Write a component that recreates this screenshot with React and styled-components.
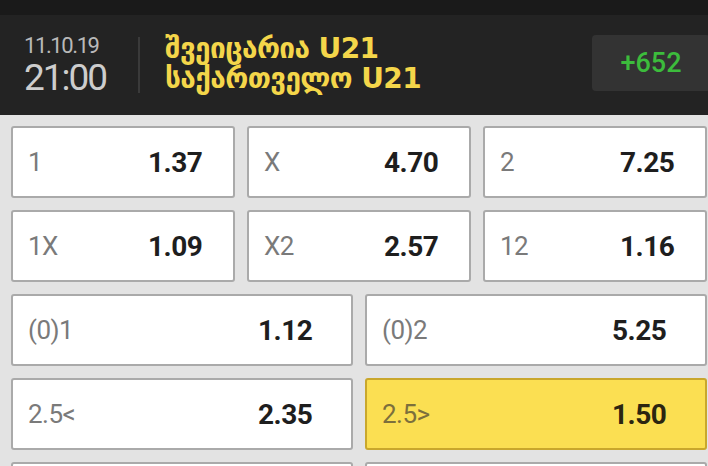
import React from "react";
import styled, { createGlobalStyle } from "styled-components";

const Global = createGlobalStyle`
  html, body { margin: 0; padding: 0; background: #e3e3e3; }
  body { font-family: Roboto, "Liberation Sans", sans-serif; overflow: hidden; }
  * { box-sizing: border-box; }
`;

const Page = styled.div`
  width: 708px;
  height: 466px;
  overflow: hidden;
  background: #e3e3e3;
`;

const TopStrip = styled.div`
  height: 15px;
  background: #1a1a1a;
`;

const Header = styled.header`
  height: 100px;
  background: #232323;
  display: flex;
  align-items: center;
  padding-left: 24px;
  overflow: hidden;
`;

const DateBlock = styled.div`
  display: flex;
  flex-direction: column;
  width: 102px;
`;

const DateText = styled.div`
  font-size: 22px;
  line-height: 25px;
  color: #b9b9b9;
  letter-spacing: -1.4px;
`;

const TimeText = styled.div`
  font-size: 37px;
  line-height: 40px;
  color: #cdcdcd;
  letter-spacing: -2px;
`;

const Separator = styled.div`
  width: 2px;
  height: 56px;
  background: #3a3a3a;
  margin: 0 25px 0 12px;
`;

const Teams = styled.div`
  display: flex;
  flex-direction: column;
  color: #f4d64a;
  font-family: "DejaVu Sans", Roboto, sans-serif;
  font-weight: bold;
  font-size: 28px;
  line-height: 30px;
  letter-spacing: -0.6px;
  margin-top: -2px;
`;

const Badge = styled.div`
  margin-left: auto;
  margin-right: -2px;
  margin-top: -4px;
  width: 118px;
  height: 56px;
  border-radius: 4px;
  background: #333333;
  display: flex;
  align-items: center;
  justify-content: center;
  color: #3cbc3c;
  font-size: 27px;
  font-weight: 500;
`;

const Body = styled.div`
  display: flex;
  flex-direction: column;
  gap: 12px;
  padding: 11px 1px 0 11px;
`;

const Row = styled.div`
  display: grid;
  grid-template-columns: repeat(${(p) => p.$cols}, 1fr);
  gap: 12px;
`;

const Cell = styled.div`
  height: 72px;
  border-radius: 3px;
  border: 2px solid ${(p) => (p.$active ? "#c9a72c" : "#aaaaaa")};
  background: ${(p) => (p.$active ? "#fbdf52" : "#ffffff")};
  display: grid;
  grid-template-columns: ${(p) => p.$labelWidth}px 1fr;
  align-items: center;
  padding-left: 15px;
`;

const Label = styled.span`
  font-size: 26px;
  color: ${(p) => (p.$active ? "#7c6f3c" : "#7a7a7a")};
  letter-spacing: -0.5px;
`;

const Value = styled.span`
  font-size: 28px;
  font-weight: 700;
  color: ${(p) => (p.$active ? "#2b2510" : "#1e1e1e")};
  letter-spacing: -0.5px;
`;

const rows = [
  {
    cols: 3,
    cells: [
      ["1", "1.37"],
      ["X", "4.70"],
      ["2", "7.25"],
    ],
  },
  {
    cols: 3,
    cells: [
      ["1X", "1.09"],
      ["X2", "2.57"],
      ["12", "1.16"],
    ],
  },
  {
    cols: 2,
    cells: [
      ["(0)1", "1.12"],
      ["(0)2", "5.25"],
    ],
  },
  {
    cols: 2,
    cells: [
      ["2.5<", "2.35"],
      ["2.5>", "1.50", true],
    ],
  },
  {
    cols: 2,
    cells: [
      ["", ""],
      ["", ""],
    ],
  },
];

export default function App() {
  return (
    <Page>
      <Global />
      <TopStrip />
      <Header>
        <DateBlock>
          <DateText>11.10.19</DateText>
          <TimeText>21:00</TimeText>
        </DateBlock>
        <Separator />
        <Teams>
          <div>შვეიცარია U21</div>
          <div>საქართველო U21</div>
        </Teams>
        <Badge>+652</Badge>
      </Header>
      <Body>
        {rows.map((row, i) => (
          <Row key={i} $cols={row.cols}>
            {row.cells.map(([label, value, active], j) => (
              <Cell
                key={j}
                $active={active}
                $labelWidth={row.cols === 3 ? 120 : 230}
              >
                <Label $active={active}>{label}</Label>
                <Value $active={active}>{value}</Value>
              </Cell>
            ))}
          </Row>
        ))}
      </Body>
    </Page>
  );
}
